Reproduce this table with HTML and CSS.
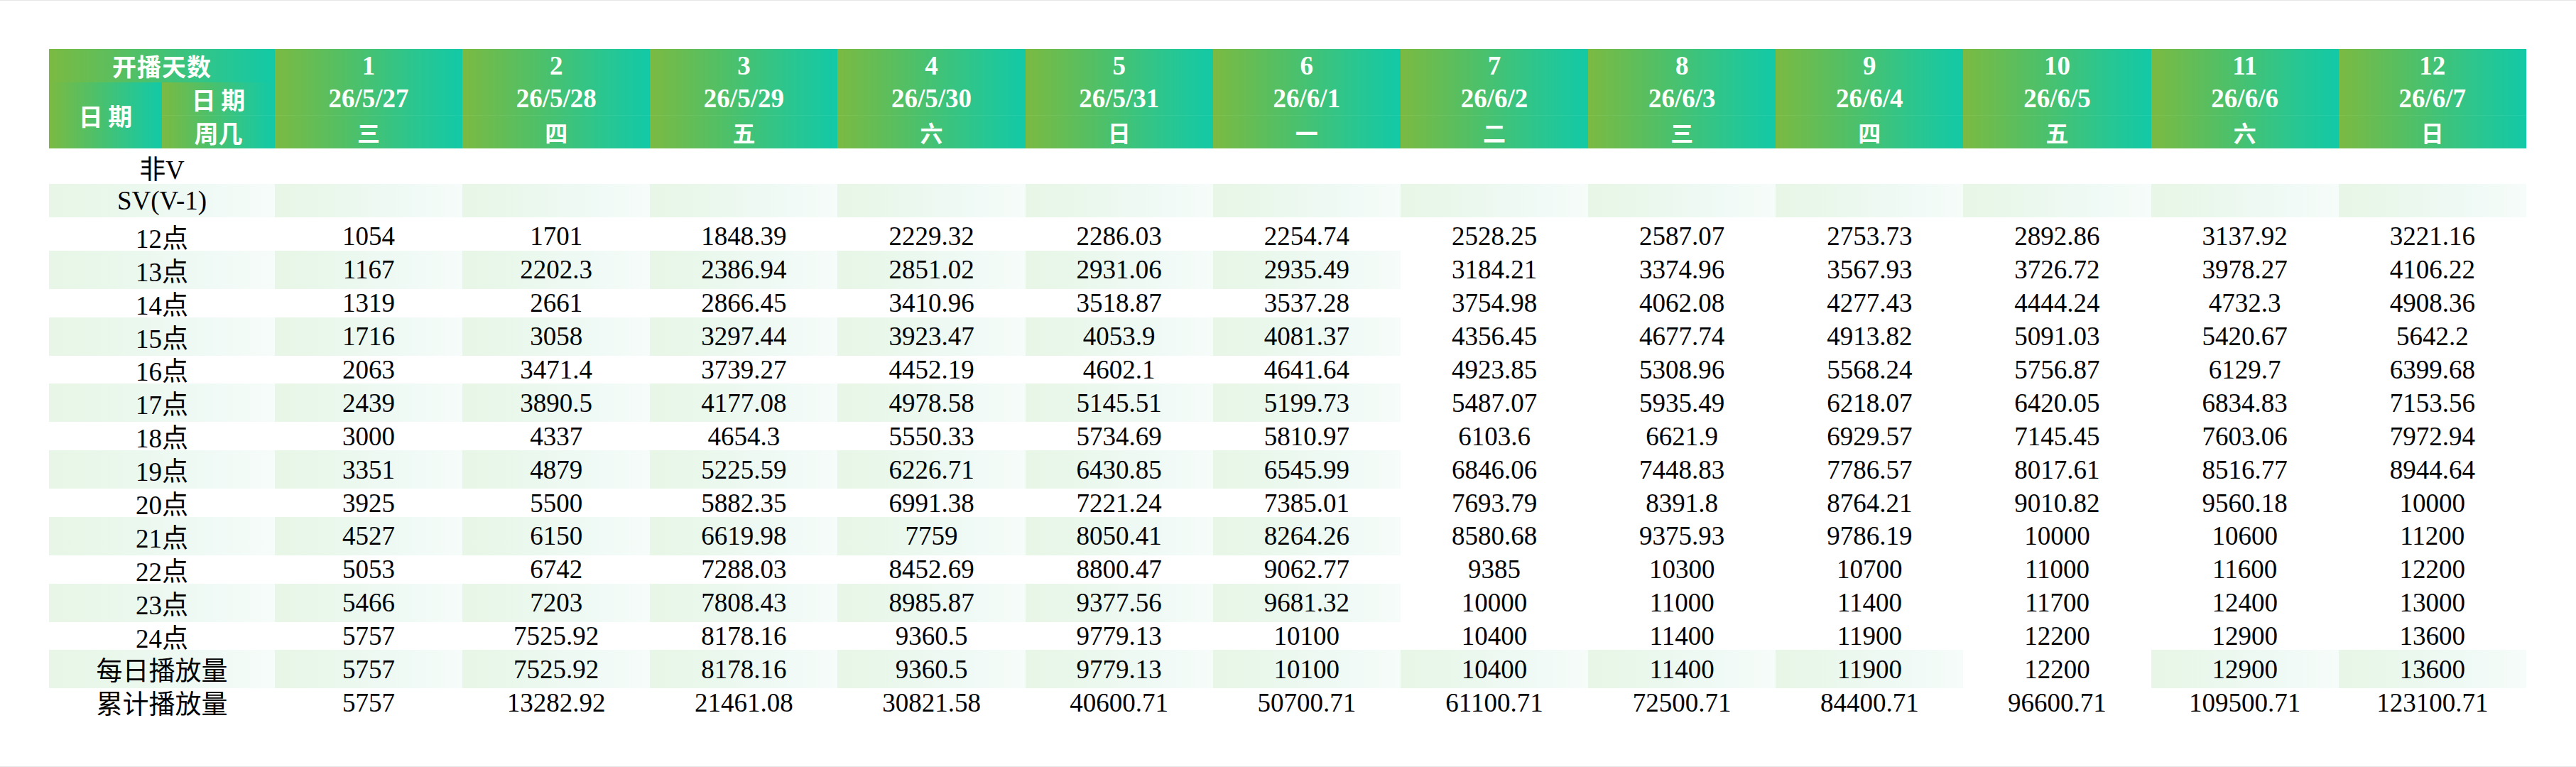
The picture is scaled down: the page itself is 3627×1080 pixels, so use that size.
FILE: index.html
```html
<!DOCTYPE html>
<html lang="zh">
<head>
<meta charset="utf-8">
<title>播放量</title>
<link rel="stylesheet" href="styles.css">
</head>
<body>
<div class="page">
  <div class="sheet">
    <div class="head">
      <div class="hc c-days">开播天数</div>
      <div class="hc c-date">日 期</div>
      <div class="hc c-sub1">日 期</div>
      <div class="hc c-sub2">周几</div>
      <div class="hcol"><span class="l1">1</span><span class="l2">26/5/27</span><span class="l3">三</span></div>
      <div class="hcol"><span class="l1">2</span><span class="l2">26/5/28</span><span class="l3">四</span></div>
      <div class="hcol"><span class="l1">3</span><span class="l2">26/5/29</span><span class="l3">五</span></div>
      <div class="hcol"><span class="l1">4</span><span class="l2">26/5/30</span><span class="l3">六</span></div>
      <div class="hcol"><span class="l1">5</span><span class="l2">26/5/31</span><span class="l3">日</span></div>
      <div class="hcol"><span class="l1">6</span><span class="l2">26/6/1</span><span class="l3">一</span></div>
      <div class="hcol"><span class="l1">7</span><span class="l2">26/6/2</span><span class="l3">二</span></div>
      <div class="hcol"><span class="l1">8</span><span class="l2">26/6/3</span><span class="l3">三</span></div>
      <div class="hcol"><span class="l1">9</span><span class="l2">26/6/4</span><span class="l3">四</span></div>
      <div class="hcol"><span class="l1">10</span><span class="l2">26/6/5</span><span class="l3">五</span></div>
      <div class="hcol"><span class="l1">11</span><span class="l2">26/6/6</span><span class="l3">六</span></div>
      <div class="hcol"><span class="l1">12</span><span class="l2">26/6/7</span><span class="l3">日</span></div>
    </div>

    <div class="body">
      <div class="row first"><div class="lab">非V</div><div></div><div></div><div></div><div></div><div></div><div></div><div></div><div></div><div></div><div></div><div></div><div></div></div>
      <div class="row"><div class="lab s">SV(V-1)</div><div class="s"></div><div class="s"></div><div class="s"></div><div class="s"></div><div class="s"></div><div class="s"></div><div class="s"></div><div class="s"></div><div class="s"></div><div class="s"></div><div class="s"></div><div class="s"></div></div>
      <div class="row"><div class="lab">12点</div><div>1054</div><div>1701</div><div>1848.39</div><div>2229.32</div><div>2286.03</div><div>2254.74</div><div>2528.25</div><div>2587.07</div><div>2753.73</div><div>2892.86</div><div>3137.92</div><div>3221.16</div></div>
      <div class="row"><div class="lab s">13点</div><div class="s">1167</div><div class="s">2202.3</div><div class="s">2386.94</div><div class="s">2851.02</div><div class="s">2931.06</div><div class="s">2935.49</div><div>3184.21</div><div>3374.96</div><div>3567.93</div><div>3726.72</div><div>3978.27</div><div>4106.22</div></div>
      <div class="row"><div class="lab">14点</div><div>1319</div><div>2661</div><div>2866.45</div><div>3410.96</div><div>3518.87</div><div>3537.28</div><div>3754.98</div><div>4062.08</div><div>4277.43</div><div>4444.24</div><div>4732.3</div><div>4908.36</div></div>
      <div class="row"><div class="lab s">15点</div><div class="s">1716</div><div class="s">3058</div><div class="s">3297.44</div><div class="s">3923.47</div><div class="s">4053.9</div><div class="s">4081.37</div><div>4356.45</div><div>4677.74</div><div>4913.82</div><div>5091.03</div><div>5420.67</div><div>5642.2</div></div>
      <div class="row"><div class="lab">16点</div><div>2063</div><div>3471.4</div><div>3739.27</div><div>4452.19</div><div>4602.1</div><div>4641.64</div><div>4923.85</div><div>5308.96</div><div>5568.24</div><div>5756.87</div><div>6129.7</div><div>6399.68</div></div>
      <div class="row"><div class="lab s">17点</div><div class="s">2439</div><div class="s">3890.5</div><div class="s">4177.08</div><div class="s">4978.58</div><div class="s">5145.51</div><div class="s">5199.73</div><div>5487.07</div><div>5935.49</div><div>6218.07</div><div>6420.05</div><div>6834.83</div><div>7153.56</div></div>
      <div class="row"><div class="lab">18点</div><div>3000</div><div>4337</div><div>4654.3</div><div>5550.33</div><div>5734.69</div><div>5810.97</div><div>6103.6</div><div>6621.9</div><div>6929.57</div><div>7145.45</div><div>7603.06</div><div>7972.94</div></div>
      <div class="row"><div class="lab s">19点</div><div class="s">3351</div><div class="s">4879</div><div class="s">5225.59</div><div class="s">6226.71</div><div class="s">6430.85</div><div class="s">6545.99</div><div>6846.06</div><div>7448.83</div><div>7786.57</div><div>8017.61</div><div>8516.77</div><div>8944.64</div></div>
      <div class="row"><div class="lab">20点</div><div>3925</div><div>5500</div><div>5882.35</div><div>6991.38</div><div>7221.24</div><div>7385.01</div><div>7693.79</div><div>8391.8</div><div>8764.21</div><div>9010.82</div><div>9560.18</div><div>10000</div></div>
      <div class="row"><div class="lab s">21点</div><div class="s">4527</div><div class="s">6150</div><div class="s">6619.98</div><div class="s">7759</div><div class="s">8050.41</div><div class="s">8264.26</div><div>8580.68</div><div>9375.93</div><div>9786.19</div><div>10000</div><div>10600</div><div>11200</div></div>
      <div class="row"><div class="lab">22点</div><div>5053</div><div>6742</div><div>7288.03</div><div>8452.69</div><div>8800.47</div><div>9062.77</div><div>9385</div><div>10300</div><div>10700</div><div>11000</div><div>11600</div><div>12200</div></div>
      <div class="row"><div class="lab s">23点</div><div class="s">5466</div><div class="s">7203</div><div class="s">7808.43</div><div class="s">8985.87</div><div class="s">9377.56</div><div class="s">9681.32</div><div>10000</div><div>11000</div><div>11400</div><div>11700</div><div>12400</div><div>13000</div></div>
      <div class="row"><div class="lab">24点</div><div>5757</div><div>7525.92</div><div>8178.16</div><div>9360.5</div><div>9779.13</div><div>10100</div><div>10400</div><div>11400</div><div>11900</div><div>12200</div><div>12900</div><div>13600</div></div>
      <div class="row"><div class="lab s">每日播放量</div><div class="s">5757</div><div class="s">7525.92</div><div class="s">8178.16</div><div class="s">9360.5</div><div class="s">9779.13</div><div class="s">10100</div><div class="s">10400</div><div class="s">11400</div><div class="s">11900</div><div>12200</div><div class="s">12900</div><div class="s">13600</div></div>
      <div class="row"><div class="lab">累计播放量</div><div>5757</div><div>13282.92</div><div>21461.08</div><div>30821.58</div><div>40600.71</div><div>50700.71</div><div>61100.71</div><div>72500.71</div><div>84400.71</div><div>96600.71</div><div>109500.71</div><div>123100.71</div></div>
    </div>
  </div>
</div>
</body>
</html>
```

FILE: styles.css
```css
html, body {
  margin: 0;
  padding: 0;
  background: #ffffff;
}

.page {
  width: 3627px;
  height: 1080px;
  box-sizing: border-box;
  border-top: 1px solid #e6e6e6;
  border-bottom: 1px solid #e6e6e6;
  padding: 68px 0 0 69px;
  font-family: "Liberation Serif", "Noto Sans CJK SC", serif;
  color: #000;
}

.sheet {
  width: 3488px;
}

.head {
  display: grid;
  grid-template-columns: 159px 159px repeat(12, 264.17px);
  grid-template-rows: 47px 46px 47px;
  color: #fdfffd;
  font-weight: 700;
  font-size: 37px;
}

.hc,
.hcol {
  background: linear-gradient(90deg, #7bba42 0%, #4fc068 40%, #2ac690 75%, #12c9a7 100%);
}

.hc {
  display: flex;
  align-items: center;
  justify-content: center;
  font-family: "Noto Sans CJK SC", sans-serif;
  font-size: 34px;
  font-weight: 700;
}

.c-days {
  grid-column: 1 / 3;
  grid-row: 1;
  letter-spacing: 1px;
}

.c-date {
  grid-column: 1;
  grid-row: 2 / 4;
}

.c-sub1 {
  grid-column: 2;
  grid-row: 2;
}

.c-sub2 {
  grid-column: 2;
  grid-row: 3;
  border-top: 1px solid rgba(255, 255, 255, 0.06);
}

.hcol {
  grid-row: 1 / 4;
  display: flex;
  flex-direction: column;
  align-items: center;
}

.hcol span {
  display: block;
  width: 100%;
  text-align: center;
}

.hcol .l1 {
  height: 47px;
  line-height: 47px;
}

.hcol .l2 {
  height: 46px;
  line-height: 46px;
}

.hcol .l3 {
  height: 47px;
  line-height: 47px;
  border-top: 1px solid rgba(255, 255, 255, 0.06);
  box-sizing: border-box;
  font-family: "Noto Sans CJK SC", sans-serif;
  font-size: 32px;
}

.row {
  display: grid;
  grid-template-columns: 318px repeat(12, 264.17px);
  height: 46.9px;
  font-size: 37px;
}

.row.first {
  height: 50px;
}

.row > div {
  display: flex;
  align-items: center;
  justify-content: center;
  white-space: nowrap;
}

.row > .s {
  background: linear-gradient(90deg, #e7f6e6 0%, #ebf8ee 40%, #eef9f4 62%, #f6fcf9 100%);
}
```
